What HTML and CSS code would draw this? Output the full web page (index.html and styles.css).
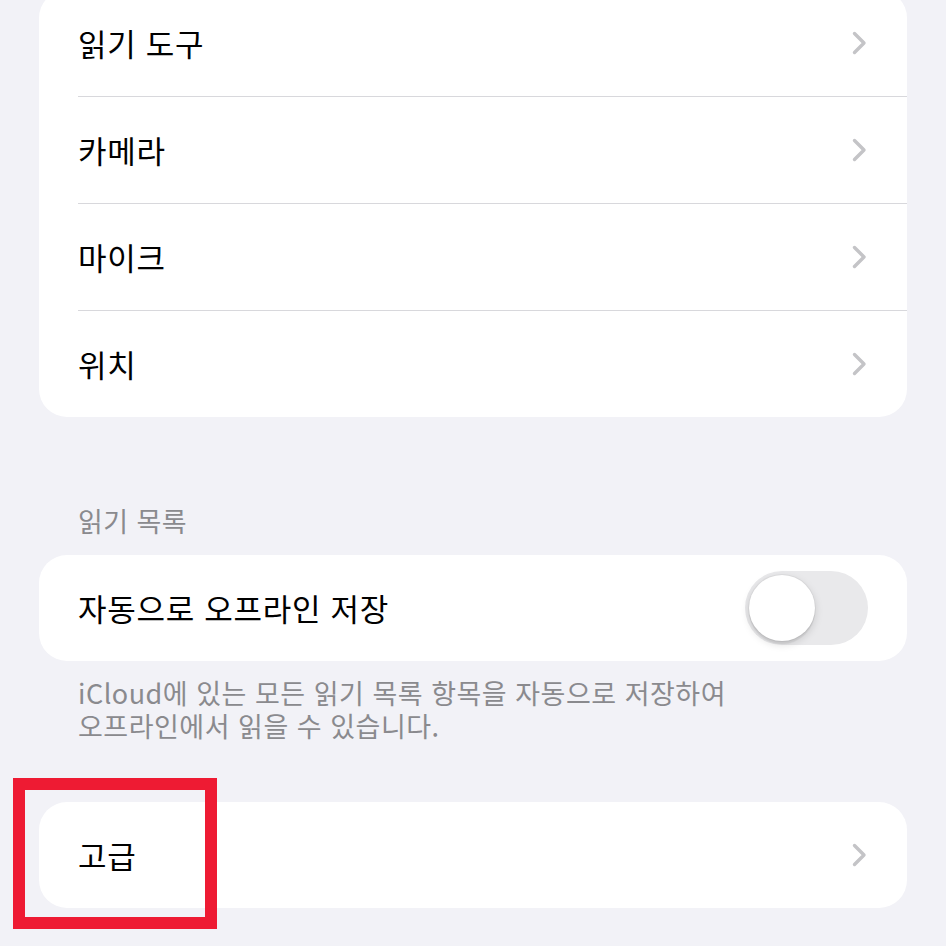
FILE: index.html
```html
<!DOCTYPE html>
<html lang="ko">
<head>
    <meta charset="UTF-8">
    <meta name="viewport" content="width=device-width, initial-scale=1.0">
    <title>Safari 설정</title>
    <link rel="stylesheet" href="styles.css">
</head>
<body>
    <div class="page">
        <ul class="group first">
            <li class="row"><span class="label">읽기 도구</span><span class="chev"><svg width="15" height="24" viewBox="0 0 15 24"><path d="M2.5 2.5 L12 12 L2.5 21.5" fill="none" stroke="#c4c4c7" stroke-width="3.4" stroke-linecap="round" stroke-linejoin="round"/></svg></span></li>
            <li class="row"><span class="label">카메라</span><span class="chev"><svg width="15" height="24" viewBox="0 0 15 24"><path d="M2.5 2.5 L12 12 L2.5 21.5" fill="none" stroke="#c4c4c7" stroke-width="3.4" stroke-linecap="round" stroke-linejoin="round"/></svg></span></li>
            <li class="row"><span class="label">마이크</span><span class="chev"><svg width="15" height="24" viewBox="0 0 15 24"><path d="M2.5 2.5 L12 12 L2.5 21.5" fill="none" stroke="#c4c4c7" stroke-width="3.4" stroke-linecap="round" stroke-linejoin="round"/></svg></span></li>
            <li class="row"><span class="label">위치</span><span class="chev"><svg width="15" height="24" viewBox="0 0 15 24"><path d="M2.5 2.5 L12 12 L2.5 21.5" fill="none" stroke="#c4c4c7" stroke-width="3.4" stroke-linecap="round" stroke-linejoin="round"/></svg></span></li>
        </ul>

        <div class="section-head">읽기 목록</div>
        <ul class="group">
            <li class="row"><span class="label">자동으로 오프라인 저장</span><span class="switch"><span class="knob"></span></span></li>
        </ul>
        <p class="section-foot">iCloud에 있는 모든 읽기 목록 항목을 자동으로 저장하여<br>오프라인에서 읽을 수 있습니다.</p>

        <ul class="group last">
            <li class="row"><span class="label">고급</span><span class="chev"><svg width="15" height="24" viewBox="0 0 15 24"><path d="M2.5 2.5 L12 12 L2.5 21.5" fill="none" stroke="#c4c4c7" stroke-width="3.4" stroke-linecap="round" stroke-linejoin="round"/></svg></span></li>
        </ul>

        <div class="mark"></div>
    </div>
</body>
</html>
```

FILE: styles.css
```css
html, body { margin: 0; padding: 0; }

body { background: #f2f2f7; font-family: "Noto Sans CJK KR", "Noto Sans", sans-serif; color: #000; }

.page { position: relative; width: 946px; height: 946px; overflow: hidden; }

.group { list-style: none; margin: 0 39px; padding: 0; background: #fff; border-radius: 28px; overflow: hidden; }

.group.first { margin-top: -10px; }

.group.last { margin-top: 60px; }

.row { display: flex; align-items: center; justify-content: space-between; height: 106px; padding: 0 40px 0 39px; font-size: 31px; line-height: 34px; letter-spacing: 0.7px; position: relative; }

.row + .row { margin-top: 1px; }
.row + .row::before { content: ""; position: absolute; left: 39px; right: 0; top: -1px; height: 1px; background: #d8d8dc; }

.chev { display: flex; width: 15px; height: 24px; }

.section-head { padding: 87px 78px 17px; font-size: 27px; line-height: 34px; letter-spacing: 0.4px; color: #8a8a8e; }

.section-foot { margin: 0; padding: 15px 78px 0; font-size: 27px; line-height: 33px; letter-spacing: 0.5px; color: #8a8a8e; }

.switch { position: relative; width: 123px; height: 74px; border-radius: 37px; background: #e9e9eb; margin-right: -1px; }

.knob { position: absolute; left: 4px; top: 4px; width: 66px; height: 66px; border-radius: 50%; background: #fff; box-shadow: 0 3px 8px rgba(0,0,0,0.15), 0 3px 1px rgba(0,0,0,0.06), 0 0 0 1px rgba(0,0,0,0.04); }

/* 빨간 강조 표시 */
.mark { position: absolute; left: 13px; top: 778px; width: 180px; height: 127px; border: 12px solid #ee1b33; }
```
